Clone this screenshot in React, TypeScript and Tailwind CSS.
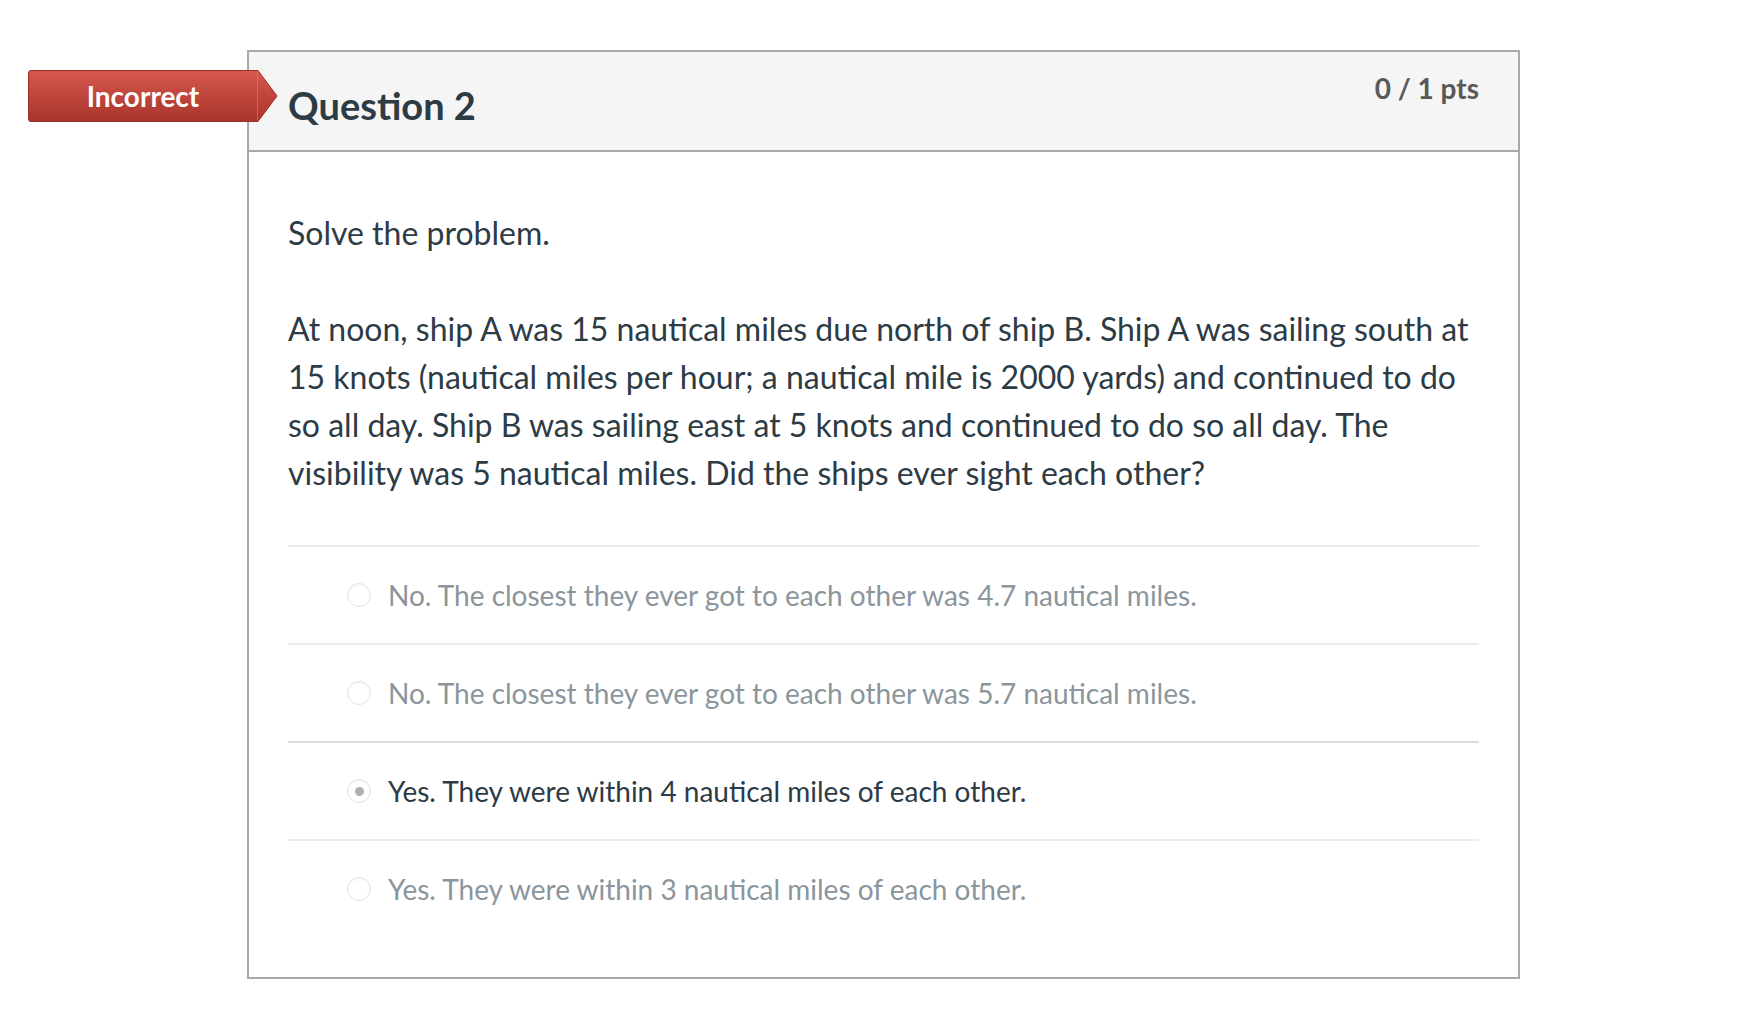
import React from "react";

const answers = [
  { text: "No. The closest they ever got to each other was 4.7 nautical miles.", selected: false },
  { text: "No. The closest they ever got to each other was 5.7 nautical miles.", selected: false },
  { text: "Yes. They were within 4 nautical miles of each other.", selected: true },
  { text: "Yes. They were within 3 nautical miles of each other.", selected: false },
];

function IncorrectBadge() {
  return (
    <div className="absolute left-[28px] top-[70px] w-[250px] h-[52px]">
      <svg className="absolute inset-0" width="250" height="52" viewBox="0 0 250 52">
        <defs>
          <linearGradient id="badgeFill" x1="0" y1="0" x2="0" y2="1">
            <stop offset="0" stopColor="#d6584d" />
            <stop offset="1" stopColor="#a8342b" />
          </linearGradient>
        </defs>
        <path d="M3 0.5 H230 L249 26 L230 51.5 H3 Q0.5 51.5 0.5 49 V3 Q0.5 0.5 3 0.5 Z" fill="url(#badgeFill)" stroke="#9c2f27" strokeWidth="1" />
        <line x1="229.5" y1="2" x2="229.5" y2="50" stroke="#e27a70" strokeOpacity="0.6" />
      </svg>
      <span className="relative flex h-full w-[230px] items-center justify-center text-[28px] font-bold text-white">
        Incorrect
      </span>
    </div>
  );
}

function Radio({ selected }: { selected: boolean }) {
  return (
    <span className="flex h-[24px] w-[24px] shrink-0 items-center justify-center rounded-full border border-[#e4e4e4] bg-white shadow-[inset_0_1px_2px_rgba(0,0,0,0.06)]">
      {selected && <span className="h-[9px] w-[9px] rounded-full bg-[#b0b0b0]" />}
    </span>
  );
}

export default function App() {
  return (
    <div className="relative min-h-screen bg-white pt-[50px] pl-[247px] font-['Lato','Noto_Sans',sans-serif] text-[#2d3b45]">
      <IncorrectBadge />

      <div className="w-[1273px] border-2 border-[#a9a9a9]">
        {/* header */}
        <div className="flex h-[100px] items-start justify-between border-b-2 border-[#a9a9a9] bg-[#f5f5f5] px-[39px]">
          <h2 className="mt-[27px] text-[38px] leading-[52px] font-bold text-[#2d3b45]">Question 2</h2>
          <span className="mt-[18px] text-[28px] leading-[36px] font-bold text-[#595959]">0 / 1 pts</span>
        </div>

        {/* body */}
        <div className="px-[39px] pt-[57px] pb-[40px] text-[32px] leading-[48px]">
          <p>Solve the problem.</p>
          <p className="mt-[48px]">
            At noon, ship A was 15 nautical miles due north of ship B. Ship A was sailing south at 15 knots
            (nautical miles per hour; a nautical mile is 2000 yards) and continued to do so all day. Ship B was
            sailing east at 5 knots and continued to do so all day. The visibility was 5 nautical miles. Did the
            ships ever sight each other?
          </p>

          <div className="mt-[48px] text-[28px]">
            {answers.map((a, i) => (
              <div
                key={i}
                className={
                  "flex h-[98px] items-center gap-[17px] border-t-2 pl-[59px] " +
                  (a.selected ? "border-[#dcdcdc]" : "border-[#ececec]")
                }
              >
                <Radio selected={a.selected} />
                <span className={a.selected ? "text-[#2d3b45]" : "text-[#8b959c]"}>{a.text}</span>
              </div>
            ))}
          </div>
        </div>
      </div>
    </div>
  );
}
